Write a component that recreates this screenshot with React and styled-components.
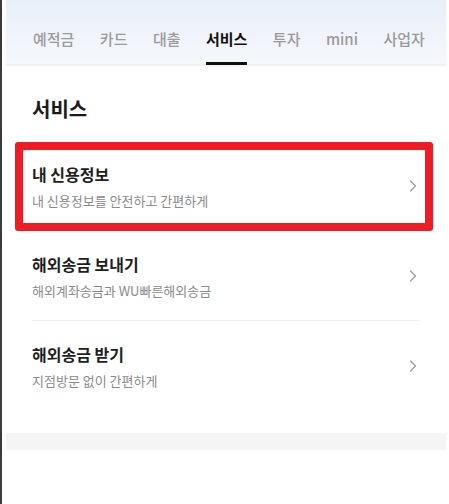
import React from "react";
import styled, { createGlobalStyle } from "styled-components";

const Global = createGlobalStyle`
  html, body { margin: 0; padding: 0; background: #fff; }
  body { font-family: "Noto Sans CJK KR", "Noto Sans", sans-serif; -webkit-font-smoothing: antialiased; }
  * { box-sizing: border-box; }
`;

const Frame = styled.div`
  min-height: 504px;
  border-left: 2px solid #3a3a3a;
  padding: 0 3px 0 4px;
  background: #fff;
`;

const Panel = styled.div`
  width: 440px;
  background: #fff;
`;

const Header = styled.header`
  position: relative;
  height: 65px;
  padding: 29px 21px 0 27px;
  background: linear-gradient(180deg, #e9eff8 0%, #eff3fa 45%, #f5f7fb 100%);
  box-shadow: 0 1px 2px rgba(0, 0, 0, 0.07);
  border-bottom: 1px solid #eceef1;
`;

const Tabs = styled.nav`
  display: flex;
  justify-content: space-between;
`;

const Tab = styled.span`
  font-size: 15px;
  line-height: 20px;
  padding-bottom: 13px;
  border-bottom: 3px solid ${(p) => (p.$active ? "#111" : "transparent")};
  color: ${(p) => (p.$active ? "#111" : "#9a9a9a")};
  font-weight: ${(p) => (p.$active ? 700 : 500)};
  white-space: nowrap;
`;

const Content = styled.main`
  padding: 0 26px;
`;

const Heading = styled.h2`
  margin: 30px 0 18px;
  font-size: 20px;
  line-height: 28px;
  font-weight: 700;
  color: #1a1a1a;
`;

const List = styled.ul`
  list-style: none;
  margin: 0;
  padding: 0;
`;

const Item = styled.li`
  position: relative;
  height: 90px;
  display: flex;
  align-items: center;
  justify-content: space-between;
  border-bottom: 1px solid ${(p) => (p.$last ? "transparent" : "#f0f0f0")};

  ${(p) =>
    p.$highlight &&
    `
    &::after {
      content: "";
      position: absolute;
      left: -17px;
      right: -13px;
      top: 1px;
      bottom: -1px;
      border: 8px solid #ee1c25;
      border-radius: 3px;
      pointer-events: none;
    }
  `}
`;

const Texts = styled.div`
  display: flex;
  flex-direction: column;
  gap: 9px;
  padding-top: 2px;
`;

const Title = styled.div`
  font-size: 16px;
  line-height: 20px;
  font-weight: 700;
  color: #1e1e1e;
`;

const Sub = styled.div`
  font-size: 13px;
  line-height: 16px;
  color: #8a8a8a;
`;

const Chevron = styled.svg`
  width: 8px;
  height: 12px;
  margin-right: 3px;
  flex: none;
`;

const Band = styled.div`
  margin-top: 22px;
  height: 17px;
  background: #f5f5f5;
`;

const tabs = ["예적금", "카드", "대출", "서비스", "투자", "mini", "사업자"];

const items = [
  { title: "내 신용정보", sub: "내 신용정보를 안전하고 간편하게", highlight: true },
  { title: "해외송금 보내기", sub: "해외계좌송금과 WU빠른해외송금" },
  { title: "해외송금 받기", sub: "지점방문 없이 간편하게" },
];

export default function App() {
  return (
    <>
      <Global />
      <Frame>
        <Panel>
          <Header>
            <Tabs>
              {tabs.map((t) => (
                <Tab key={t} $active={t === "서비스"}>
                  {t}
                </Tab>
              ))}
            </Tabs>
          </Header>
          <Content>
            <Heading>서비스</Heading>
            <List>
              {items.map((it, i) => (
                <Item key={it.title} $highlight={it.highlight} $last={i === items.length - 1}>
                  <Texts>
                    <Title>{it.title}</Title>
                    <Sub>{it.sub}</Sub>
                  </Texts>
                  <Chevron viewBox="0 0 8 12">
                    <polyline
                      points="1.5,1 6.5,6 1.5,11"
                      fill="none"
                      stroke="#9c9c9c"
                      strokeWidth="1.3"
                      strokeLinecap="round"
                      strokeLinejoin="round"
                    />
                  </Chevron>
                </Item>
              ))}
            </List>
          </Content>
          <Band />
        </Panel>
      </Frame>
    </>
  );
}
